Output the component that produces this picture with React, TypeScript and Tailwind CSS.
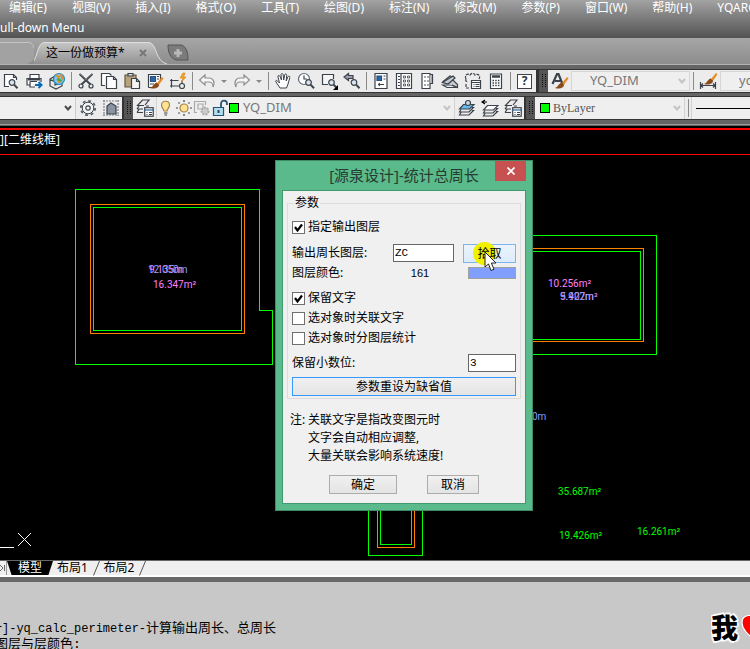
import { useState } from "react";
import type { ReactNode } from "react";

const INK = "#3c424b";

type IconProps = {
  label: string;
  children: ReactNode;
  className?: string;
};

function ToolButton({ label, children, className = "w-[23px]" }: IconProps) {
  return (
    <button
      type="button"
      aria-label={label}
      className={`flex h-[22px] shrink-0 items-center justify-center ${className}`}
    >
      <Glyph>{children}</Glyph>
    </button>
  );
}

function Glyph({ children }: { children: ReactNode }) {
  return (
    <svg width="18" height="18" viewBox="0 0 18 18" fill="none" stroke={INK} strokeWidth="1.2" className="shrink-0">
      {children}
    </svg>
  );
}

function Separator() {
  return (
    <span className="flex w-[6px] shrink-0 justify-center">
      <span className="h-[18px] w-px bg-[#8a8a8a]" />
    </span>
  );
}

function Grip() {
  return (
    <span className="flex w-[9px] shrink-0 items-center justify-center self-stretch bg-[#555]">
      <svg width="5" height="14" viewBox="0 0 5 14" shapeRendering="crispEdges">
        <path d="M1 0v14M4 0v14" stroke="#0c0c0c" strokeDasharray="1 1" />
      </svg>
    </span>
  );
}

function Caret() {
  return (
    <button type="button" aria-label="More" className="flex w-3 shrink-0 items-center justify-center">
      <svg width="6" height="3" viewBox="0 0 6 3">
        <path d="M0 0h6L3 3z" fill="#888" />
      </svg>
    </button>
  );
}

function Chevron({ color }: { color: string }) {
  return (
    <svg width="8" height="6" viewBox="0 0 8 6" fill="none" stroke={color} strokeWidth="2" className="pointer-events-none shrink-0">
      <path d="M1 1l3 3.5L7 1" />
    </svg>
  );
}

function Magnifier({ x, y }: { x: number; y: number }) {
  return (
    <g transform={`translate(${x} ${y})`}>
      <circle cx="3.5" cy="3.5" r="2.8" fill="#d9e4ee" />
      <path d="M5.6 5.6l3.4 3.6" strokeWidth="2" />
    </g>
  );
}

function Brush() {
  return (
    <g stroke="none">
      <path d="M11 11l5-6 1.6 1.2-4.4 6.2z" fill="#e88b25" />
      <path d="M4 16c3-.4 3-4 6.6-5.4l2.6 2.2c-.6 3.6-4.8 4.6-9.2 3.200z" fill="#8a4b1c" />
    </g>
  );
}

// stack of three open sheets, the top one optionally tinted
function Sheets({ top = "none" }: { top?: string }) {
  return (
    <g>
      <path d="M3 13.500L1.500 16h9.500l4.500-4.500H14M3 10.500L1.500 13h9.500l4.500-4.500H14" />
      <path d="M5.500 5.500H16L11.500 10H1.500z" fill={top} />
    </g>
  );
}

function LayerPanel() {
  return (
    <g>
      <path d="M1 13.500h6M3 10.500L1 13.500M1 10h6M3 7l-2 3M9 6l4-5H6.500L1.500 6.500H8M10 7h3" />
      <rect x="8.700" y="8.700" width="8.500" height="8.500" fill="#fff" />
      <path d="M8.500 11h9" stroke="#24639f" />
      <path d="M10.500 13.500h1m1.500 0h3m-5.500 2h1m1.500 0h3" strokeWidth="1" />
    </g>
  );
}

const menus = [
  "编辑(E)",
  "视图(V)",
  "插入(I)",
  "格式(O)",
  "工具(T)",
  "绘图(D)",
  "标注(N)",
  "修改(M)",
  "参数(P)",
  "窗口(W)",
  "帮助(H)",
  "YQARCH",
];

function MenuBar() {
  return (
    <header className="h-[38px] shrink-0 overflow-hidden bg-linear-to-b from-[#a3a3a3] to-[#535353] text-[12px] text-white">
      <nav className="flex h-[16px] items-center gap-[25px] pl-[9px] whitespace-nowrap">
        {menus.map((menu) => (
          <button key={menu} type="button" className="shrink-0 leading-[14px]">
            {menu}
          </button>
        ))}
      </nav>
      <p className="pt-[3px] leading-[18px]">ull-down Menu</p>
    </header>
  );
}

function DocumentTabs() {
  return (
    <div className="flex h-[27px] shrink-0 items-end border-b border-[#b2b2b2] bg-linear-to-b from-[#a6a6a6] to-[#8d8d8d]">
      <svg width="34" height="22" viewBox="0 0 34 22" className="shrink-0">
        <path d="M0 0h28c5 0 5 3 7 8v5c-2 5-4 8-8 9H0z" fill="#a2a2a2" />
        <path d="M0 .5h28c5 0 5 3 7 8" fill="none" stroke="#c4c4c4" />
      </svg>
      <div className="relative flex h-[22px] w-[133px] shrink-0 items-center justify-between pr-5 pl-3">
        <svg viewBox="0 0 134 22" preserveAspectRatio="none" className="absolute inset-0 size-full">
          <defs>
            <linearGradient id="tab" x1="0" y1="0" x2="0" y2="1">
              <stop offset="0" stopColor="#c6c6c6" />
              <stop offset="1" stopColor="#929292" />
            </linearGradient>
          </defs>
          <path d="M-4 22C4 20 2 2 10 .5h106c8 1 6 19 18 21.500" fill="url(#tab)" stroke="#dedede" />
        </svg>
        <button type="button" className="relative text-[12px] leading-[18px] whitespace-nowrap text-black">
          这一份做预算*
        </button>
        <button type="button" aria-label="Close drawing" className="relative">
          <svg width="8" height="8" viewBox="0 0 8 8" stroke="#777" strokeWidth="2">
            <path d="M1 1l6 6M7 1L1 7" />
          </svg>
        </button>
      </div>
      <button type="button" aria-label="New drawing" className="flex h-[22px] shrink-0 items-start pt-[2px]">
        <svg width="22" height="17" viewBox="0 0 22 17">
          <path d="M1 1h13c5 1 7 7 7 15H9C3 14 1 8 1 1z" fill="#7b7b7b" stroke="#555" />
          <path d="M11 5v8M7 9h8" stroke="#b9b9b9" strokeWidth="3" />
        </svg>
      </button>
    </div>
  );
}

function StandardToolbar() {
  return (
    <div className="flex h-[24px] shrink-0 items-center overflow-hidden border-y border-[#343434] bg-[#ececec]">
      <ToolButton label="Preview" className="w-[22px]">
        <path d="M7 14.500H2.500v-12h9l3 3V8" fill="#fff" />
        <path d="M11.500 2.500v3h3" />
        <Magnifier x={6.500} y={7} />
      </ToolButton>
      <ToolButton label="Plot">
        <path d="M5 6V2.500h9V6M4.500 13H2V6.500h14V10M5 9.500h7M5 9.500V15h5" fill="#fff" />
        <path d="M3 7.500h12" strokeWidth="2" />
        <path d="M10 13h6m-2.500-3l3 3-3 3" stroke="#0868b4" strokeWidth="2" />
      </ToolButton>
      <ToolButton label="Publish">
        <path d="M2 7l5-3v9l7-2v3l-6 3-6-3zM7 10l-5-3" fill="#e8e8e8" />
        <circle cx="11" cy="7" r="5.500" fill="#82c7e8" stroke="#168cc4" />
        <path d="M8 3l3 2-1 3 2 3M13 2l1 4 2 1" stroke="#e88922" strokeWidth="2" />
        <path d="M9 7l5 2" stroke="#4cab48" strokeWidth="2" />
      </ToolButton>
      <Separator />
      <ToolButton label="Cut">
        <path d="M2.500 2l11 10.500M15.500 2L4.500 12.500" strokeWidth="1.800" />
        <path d="M3 2l7 6M15 2L8 8" stroke="#777" strokeWidth="1" />
        <circle cx="4" cy="14" r="2" />
        <circle cx="14" cy="14" r="2" />
      </ToolButton>
      <ToolButton label="Copy">
        <path d="M5 13.500H1.500v-12h8l2 2" fill="#fff" />
        <path d="M6.500 4.500h7l3 3v9h-10z" fill="#fff" />
        <path d="M13.500 4.500v3h3" />
      </ToolButton>
      <ToolButton label="Paste">
        <path d="M2 3h11v12H2z" fill="#baa27c" stroke="#605747" />
        <path d="M5 1.500h5V4H5z" fill="#ddd" />
        <path d="M8.500 6.500h5l3 3v7h-8z" fill="#f4f4f4" />
        <path d="M13.500 6.500v3h3" />
      </ToolButton>
      <ToolButton label="Match properties">
        <path d="M2.500 15.500v-13h12V9M2.500 15.500H7" fill="#fff" />
        <path d="M4.500 4.500h5v5h-5z" fill="#2c67a5" stroke="#2a5384" />
        <path d="M11 4.500h2M11 7h2M4 12h4" />
        <Brush />
      </ToolButton>
      <ToolButton label="Block editor">
        <path d="M13 8.500V14H2.500V8.500h7M1 8.500h3M2.500 7v3M1 14h3M2.500 12.500v3" />
        <circle cx="13" cy="14" r="2.500" fill="#eee" />
        <path d="M14 1l-3 5h3l-1.500 4L17 5h-2.500L16 1z" fill="#f3a51e" stroke="#df8517" strokeWidth=".7" />
      </ToolButton>
      <Separator />
      <ToolButton label="Undo">
        <path d="M7 3L1.500 8 7 13v-3h4c3 0 4 1 4 5 2.500-5 0-9-4-9H7z" fill="#f5f5f5" stroke="#8f8f8f" />
      </ToolButton>
      <Caret />
      <ToolButton label="Redo">
        <path d="M11 3l5.500 5L11 13v-3H7c-3 0-4 1-4 5-2.500-5 0-9 4-9h4z" fill="#f5f5f5" stroke="#8f8f8f" />
      </ToolButton>
      <Caret />
      <Separator />
      <ToolButton label="Pan">
        <path
          d="M6 16L2 10c-1-2 1-2 2-.500L5.500 11 4 5c-.500-2 1.500-2 2-.500L7.500 8 7 3c0-2 2-2 2.200 0L9.700 8l1-5c.4-2 2.300-1 2 .500L12.200 9l1.600-4c.7-1.500 2.500-1 2 .700L14 12l-1.500 4z"
          fill="#fff"
          strokeWidth="1"
        />
      </ToolButton>
      <ToolButton label="Zoom realtime">
        <circle cx="7" cy="7" r="5.500" fill="#fff" stroke="#606a78" />
        <path d="M7 3.500V7h3" />
        <Magnifier x={8} y={7} />
      </ToolButton>
      <ToolButton label="Zoom window">
        <path d="M8 12.500H2.500v-10h11V7" fill="#f5f5f5" />
        <Magnifier x={8} y={7} />
        <path d="M18 13v5h-5z" fill="#000" stroke="none" />
      </ToolButton>
      <ToolButton label="Zoom previous">
        <path d="M5.500 1.500L1 5l4.500 3.500v-2H10v-3H5.500z" fill="#98a0ab" />
        <Magnifier x={7.500} y={7} />
      </ToolButton>
      <Separator />
      <ToolButton label="Properties">
        <path d="M3 1.500h12v15H3z" fill="#fff" />
        <path d="M5 4h4.500v4.500H5z" fill="#2c67a5" stroke="#244f7d" />
        <path d="M11.500 4h2M11.500 7h2M6 12.500h6M8 11l-2 1.500L8 14" strokeWidth="1" />
      </ToolButton>
      <ToolButton label="Design center">
        <path d="M1.500 1.500h15v15h-15zM6 1.500v15" fill="#fff" />
        <path d="M3 4.500h2M3 7.500h2M3 10.500h2M3 13.500h2" strokeWidth="1" />
        <path d="M8.500 4h2v2h-2zM12.500 4h2v2h-2zM8.500 8h2v2h-2zM12.500 8h2v2h-2zM8.500 12h2v2h-2zM12.500 12h2v2h-2z" strokeWidth=".8" />
      </ToolButton>
      <ToolButton label="Tool palettes">
        <path d="M4 1.500h8v15H4z" fill="#fff" />
        <path d="M12 2.500h2.500v9H12" fill="#bbb" />
        <path d="M6 4h2v2H6zM9 4h2v2H9zM6 8h2v2H6zM9 8h2v2H9zM6 12h2v2H6zM9 12h2v2H9z" fill="#aaa" stroke="none" />
      </ToolButton>
      <ToolButton label="Sheet set">
        <path d="M1.500 10L9 4l2 1-5 6M1.500 13h9l6 2.500H6z" fill="#e6e9ed" />
        <path d="M1.500 10.500L12 4l2 2-7 6zM7 12l5-4 4.500 4.500v3L11 13" fill="#c6cbd2" />
      </ToolButton>
      <ToolButton label="Markup">
        <path d="M2 7C0 3 4 1 6 3c2-3 5-1 5 0 3-2 6 1 4 4M2 7c-1 2 1 3 2 3M2 12v4h4" strokeDasharray="3 1" />
        <path d="M7.500 8.500h9v8h-9z" fill="#fff" />
        <path d="M7.500 10.500h9M9.500 12.500h1m1 0h4m-6 2h1m1 0h4" strokeWidth="1" />
      </ToolButton>
      <ToolButton label="Calculator">
        <path d="M3.500 2h11v14.500h-11z" fill="#fff" />
        <path d="M5 4.500h8" strokeWidth="2.500" />
        <path d="M5.500 8.500h8M5.500 11h8M5.500 13.500h8" strokeWidth="1.500" strokeDasharray="1.500 1.200" />
      </ToolButton>
      <Separator />
      <button
        type="button"
        aria-label="Help"
        className="mx-1 flex h-[15px] w-[15px] shrink-0 items-center justify-center border border-[#3c424b] bg-white text-[12px] font-bold text-[#30353c]"
      >
        ?
      </button>
      <span className="w-[3px] shrink-0 self-stretch bg-[#333]" />
      <Grip />
      <ToolButton label="Text style">
        <path d="M1.500 12L6 2h1.500L11.500 12M4 9h6" strokeWidth="2.200" />
        <Brush />
      </ToolButton>
      <div className="flex h-[20px] w-[119px] shrink-0 items-center border border-[#d5d5d5] bg-[#efefef] pr-[3px]">
        <select aria-label="Text style name" className="min-w-0 flex-1 appearance-none pl-[18px] text-[13px] text-[#777]">
          <option>YQ_DIM</option>
        </select>
        <Chevron color="#c4c4c4" />
      </div>
      <Separator />
      <ToolButton label="Dimension style" className="w-6">
        <path d="M1.500 10v7M16.500 10v7M2 13.500h14M4 11.500l-2 2 2 2M14 11.500l2 2-2 2" />
        <g transform="translate(1 -4)">
          <Brush />
        </g>
      </ToolButton>
      <div className="flex h-[20px] min-w-[110px] flex-1 items-center border border-[#d5d5d5] bg-[#efefef]">
        <select aria-label="Dimension style name" className="min-w-0 flex-1 appearance-none pl-[18px] text-[13px] text-[#777]">
          <option>yc</option>
        </select>
      </div>
    </div>
  );
}

function LayerToolbar() {
  return (
    <div className="flex h-[24px] shrink-0 items-center overflow-hidden border-y border-[#343434] bg-[#ececec]">
      <div className="flex h-[22px] w-[76px] shrink-0 items-center border-r border-[#ccc] bg-[#f0f0f0] pr-[3px]">
        <select aria-label="Workspace" className="min-w-0 flex-1 appearance-none">
          <option value="" />
        </select>
        <Chevron color="#4a4a4a" />
      </div>
      <ToolButton label="Workspace settings">
        <circle cx="9" cy="9" r="7.200" stroke="#5a616b" strokeWidth="1.800" strokeDasharray="2.827 2.827" />
        <circle cx="9" cy="9" r="5.800" fill="#f4f4f4" strokeWidth="1" />
        <circle cx="9" cy="9" r="2.200" />
      </ToolButton>
      <ToolButton label="My workspace">
        <path d="M2 1v16M16 1v16M1 2h16M1 16h16" stroke="#7b828b" strokeDasharray="2 1" />
        <path d="M5 15V7l4-3 5 3v8z" fill="#8b939e" />
      </ToolButton>
      <span className="w-[2px] shrink-0 self-stretch bg-[#333]" />
      <Grip />
      <ToolButton label="Layer properties">
        <LayerPanel />
      </ToolButton>
      <div className="flex h-[22px] w-[299px] shrink-0 items-center border-x border-[#d2d2d2] bg-[#efefef] pr-[3px]">
        <Glyph>
          <path d="M7 12c0-2-2.500-3-2.500-6 0-5 8-5 8 0 0 3-2.500 4-2.500 6z" fill="#ffe294" stroke="#a78445" />
          <path d="M7 14h3.500M7.500 16h2.500" />
        </Glyph>
        <Glyph>
          <path d="M9 1v2M9 15v2M1 9h2M15 9h2M3.500 3.500l1 1M13.500 13.500l1 1M3.500 14.500l1-1M13.500 4.500l1-1" />
          <circle cx="9" cy="9" r="4" fill="#ffe294" stroke="#a78445" />
        </Glyph>
        <Glyph>
          <path d="M4 13.500H1.500v-11h11V6M5 5h5v5H5z" stroke="#aaa" />
          <circle cx="12" cy="12" r="3.500" fill="#ccc" stroke="#aaa" strokeWidth="2" strokeDasharray="2 1" />
        </Glyph>
        <Glyph>
          <path d="M10 8V5c0-5 6-4 6-.500V6" stroke="#255374" strokeWidth="1.800" />
          <path d="M2.500 8.500h10v8h-10z" fill="#b1dff2" stroke="#255374" />
          <path d="M7.500 11v3" strokeWidth="2" />
        </Glyph>
        <span className="size-[10px] shrink-0 border border-black bg-[#00ff00]" />
        <select aria-label="Layer" className="min-w-0 flex-1 appearance-none pl-1 text-[13px] text-[#777]">
          <option>YQ_DIM</option>
        </select>
        <Chevron color="#c4c4c4" />
      </div>
      <ToolButton label="Make current">
        <Sheets top="#64bbed" />
        <circle cx="10" cy="4" r="2.500" fill="#c7ddeb" />
      </ToolButton>
      <ToolButton label="Layer previous">
        <g transform="translate(1 1)">
          <Sheets top="#fff" />
        </g>
        <path d="M1 3h5M4 1L1 3l3 2" stroke="#000" />
      </ToolButton>
      <ToolButton label="Layer states">
        <LayerPanel />
      </ToolButton>
      <span className="w-[2px] shrink-0 self-stretch bg-[#333]" />
      <Grip />
      <div className="flex h-[22px] w-[150px] shrink-0 items-center border-r border-[#d2d2d2] bg-[#efefef] pr-[3px] pl-[5px]">
        <span className="size-[10px] shrink-0 border border-black bg-[#00ff00]" />
        <select
          aria-label="Color"
          className="min-w-0 flex-1 appearance-none pl-[3px] font-['Liberation_Serif',serif] text-[12px] text-[#555]"
        >
          <option>ByLayer</option>
        </select>
        <Chevron color="#c4c4c4" />
      </div>
      <Separator />
      <button type="button" aria-label="Linetype" className="flex h-[22px] flex-1 items-center border-l border-[#d2d2d2] bg-[#efefef] pl-1">
        <span className="h-px w-full bg-black" />
      </button>
    </div>
  );
}

type DrawingLabel = { x: number; y: number; text: string; color: string };

const drawingLabels: DrawingLabel[] = [
  { x: 149, y: 273, text: "9.135m", color: "#ff80ff" },
  { x: 148, y: 273, text: "12.050m", color: "#80a0ff" },
  { x: 153, y: 288, text: "16.347m²", color: "#ff80ff" },
  { x: 548, y: 287, text: "10.256m²", color: "#ff80ff" },
  { x: 560, y: 300, text: "5.407m²", color: "#ff80ff" },
  { x: 560, y: 300, text: "9.922m", color: "#80a0ff" },
  { x: 532, y: 420, text: "0m", color: "#80a0ff" },
  { x: 558, y: 495, text: "35.687m²", color: "#00ff00" },
  { x: 559, y: 539, text: "19.426m²", color: "#00ff00" },
  { x: 637, y: 535, text: "16.261m²", color: "#00ff00" },
];

function Drawing() {
  return (
    <svg width="750" height="434" viewBox="0 126 750 434" className="absolute top-0 left-0" fill="none">
      <g stroke="#00ff00" shapeRendering="crispEdges">
        <path d="M75.500 189.500h184v121h13v54h-197z" />
        <path d="M93.500 207.500h148v123h-148z" />
        <path d="M500 235.500h156.500v119H500M500 251.500h140.500v88H500" />
        <path d="M368.500 480v75.500h54V480M380.500 480v64.500h31V480" />
      </g>
      <g stroke="#ff8000" shapeRendering="crispEdges">
        <path d="M90.500 204.500h154v129h-154z" />
        <path d="M500 248.500h143.500v93H500" />
        <path d="M377.500 480v67.500h37V480" />
      </g>
      <path d="M18 533l13 13M31 533l-13 13M0 547.500h14" stroke="#fff" />
      <g className="font-['Roboto',sans-serif] text-[10px]">
        {drawingLabels.map((label) => (
          <text key={label.text} x={label.x} y={label.y} fill={label.color}>
            {label.text}
          </text>
        ))}
      </g>
    </svg>
  );
}

type CheckRowProps = {
  label: string;
  checked: boolean;
  onChange: (checked: boolean) => void;
};

function CheckRow({ label, checked, onChange }: CheckRowProps) {
  return (
    <label className="flex h-5 items-center gap-[3px]">
      <span className="relative size-[13px] shrink-0">
        <input
          type="checkbox"
          checked={checked}
          onChange={(e) => onChange(e.target.checked)}
          className="block size-[13px] appearance-none border border-[#707070] bg-white"
        />
        {checked && (
          <svg viewBox="0 0 13 13" className="pointer-events-none absolute inset-0" fill="none" stroke="#000" strokeWidth="2.200">
            <path d="M3 6l2.500 3.500L10 3.500" />
          </svg>
        )}
      </span>
      {label}
    </label>
  );
}

const plainButton = "h-[19px] border border-[#acacac] bg-linear-to-b from-[#f0f0f0] to-[#e4e4e4] leading-[17px]";
const textField = "h-[18px] border border-[#666] bg-white px-px font-['Liberation_Mono',monospace] text-[11px]";

function PerimeterDialog() {
  const [useLayer, setUseLayer] = useState(true);
  const [keepText, setKeepText] = useState(true);
  const [linkText, setLinkText] = useState(false);
  const [byLayer, setByLayer] = useState(false);

  return (
    <div
      role="dialog"
      aria-labelledby="dialog-title"
      className="absolute top-[34px] left-[275px] w-[258px] border border-[#3f8c67] bg-[#5bba8b] px-[6px] pb-[6px] text-black"
    >
      <div className="grid h-[29px] grid-cols-[31px_1fr_31px] items-start">
        <h1 id="dialog-title" className="col-start-2 text-center text-[15px] leading-7 whitespace-nowrap text-[#263c31]">
          [源泉设计]-统计总周长
        </h1>
        <button type="button" aria-label="Close" className="flex h-5 items-center justify-center bg-[#c75050]">
          <svg width="8" height="8" viewBox="0 0 8 8" stroke="#fff" strokeWidth="1.700">
            <path d="M.5.500l7 7M7.500.500l-7 7" />
          </svg>
        </button>
      </div>
      <form
        className="border border-[#419a6d] bg-[#f0f0f0] px-1 pt-1 pb-[9px] text-[12px] leading-[18px]"
        onSubmit={(e) => e.preventDefault()}
      >
        <fieldset className="border border-[#dcdcdc] px-1 pb-[2px]">
          <legend className="ml-[2px] px-px leading-4">参数</legend>
          <div className="pt-[6px]">
            <CheckRow label="指定输出图层" checked={useLayer} onChange={setUseLayer} />
          </div>
          <div className="mt-1 flex h-6 items-center">
            <label htmlFor="layer" className="flex-1">
              输出周长图层:
            </label>
            <input id="layer" defaultValue="ZC" className={`w-[61px] ${textField}`} />
            <button
              type="button"
              className="relative ml-[9px] h-[19px] w-[53px] border border-[#7eb4ea] bg-linear-to-b from-[#ecf4fc] to-[#dcecfc] leading-[17px]"
            >
              <span className="absolute -top-[3px] left-[9px] size-[23px] rounded-full bg-[#f0f000]" />
              <span className="relative">拾取</span>
              <svg width="14" height="21" viewBox="0 0 14 21" className="absolute top-[6px] left-5">
                <path d="M1 1v15l3.500-3 2.500 6.500 3-1.300L7.400 12H12z" fill="#fff" stroke="#222" />
              </svg>
            </button>
          </div>
          <div className="flex h-4 items-center">
            <span className="flex-1">图层颜色:</span>
            <output className="w-[54px] text-center font-['Liberation_Sans',sans-serif] text-[11px]">161</output>
            <button type="button" aria-label="图层颜色" className="ml-[21px] h-3 w-12 border border-[#a0a0a0] bg-[#809fff]" />
          </div>
          <div className="mt-[7px]">
            <CheckRow label="保留文字" checked={keepText} onChange={setKeepText} />
            <CheckRow label="选对象时关联文字" checked={linkText} onChange={setLinkText} />
            <CheckRow label="选对象时分图层统计" checked={byLayer} onChange={setByLayer} />
          </div>
          <div className="mt-[5px] flex h-5 items-center">
            <label htmlFor="digits" className="flex-1">
              保留小数位:
            </label>
            <input id="digits" defaultValue="3" className={`w-12 ${textField}`} />
          </div>
          <button
            type="button"
            className="mt-1 block h-[19px] w-full border border-[#3399ff] bg-linear-to-b from-[#f0f0f0] to-[#e4e4e4] leading-[17px]"
          >
            参数重设为缺省值
          </button>
        </fieldset>
        <div className="mt-3 flex pl-[3px]">
          <span className="w-[18px]">注:</span>
          <p>
            关联文字是指改变图元时
            <br />
            文字会自动相应调整,
            <br />
            大量关联会影响系统速度!
          </p>
        </div>
        <div className="mt-[10px] flex justify-center gap-[30px]">
          <button type="submit" className={`w-[68px] ${plainButton}`}>
            确定
          </button>
          <button type="button" className={`w-[52px] ${plainButton}`}>
            取消
          </button>
        </div>
      </form>
    </div>
  );
}

function Slash() {
  return (
    <svg width="8" height="15" viewBox="0 0 8 15" fill="none" stroke="#555" className="shrink-0">
      <path d="M7.500 0L1.500 14.500" />
    </svg>
  );
}

function LayoutTabs() {
  return (
    <div className="flex h-[17px] shrink-0 items-start border-t border-b-2 border-t-[#666] border-b-white bg-[#efefef] text-[12px] leading-[14px]">
      <button type="button" aria-label="Last layout" className="h-[14px] w-[7px] border-r border-[#999]">
        <svg width="6" height="14" viewBox="0 0 6 14" fill="none" stroke="#666">
          <path d="M0 4l3 3-3 3M4.500 4v6" />
        </svg>
      </button>
      <button type="button" className="h-[14px] w-[46px] bg-black text-white [clip-path:polygon(0_0,100%_0,90%_100%,10%_100%)]">
        模型
      </button>
      <button type="button" className="w-[39px] text-center">
        布局1
      </button>
      <Slash />
      <button type="button" className="w-[38px] text-center">
        布局2
      </button>
      <Slash />
    </div>
  );
}

function CommandLine() {
  return (
    <section className="flex h-[72px] shrink-0 items-end justify-between overflow-hidden border-t-[5px] border-[#686868] bg-[#c8c8c8]">
      <div className="-mb-[3px] -ml-[11px] font-['Liberation_Mono','Noto_Sans_CJK_SC',monospace] text-[12px] leading-[15px] whitespace-nowrap text-black">
        <p>
          <span className="text-[13px]">计</span>]-yq_calc_perimeter-<span className="text-[13px]">计算输出周长、总周长</span>
        </p>
        <p className="pl-[6px] text-[13px]">图层与层颜色:</p>
      </div>
      <div className="flex w-[39px] shrink-0 items-center gap-[3px] overflow-hidden pb-[5px]">
        <span className="shrink-0 text-[27px] leading-8 font-black text-black [text-shadow:0_0_2px_#fff,2px_1px_1px_#fff,-2px_-1px_1px_#fff,1px_-2px_1px_#fff,-1px_2px_1px_#fff]">
          我
        </span>
        <svg width="32" height="29" viewBox="0 0 30 27" className="shrink-0">
          <path d="M15 26C8 20 1 15 1 8c0-8 11-9 14-2 3-7 14-6 14 2 0 7-7 12-14 18z" fill="#f00" stroke="#fff" />
        </svg>
      </div>
    </section>
  );
}

export default function App() {
  return (
    <div className="flex h-screen flex-col overflow-hidden bg-[#656565] font-['Noto_Sans','Noto_Sans_CJK_SC',sans-serif]">
      <MenuBar />
      <DocumentTabs />
      <div className="flex shrink-0 flex-col gap-[3px] pt-1 pb-[4px]">
        <StandardToolbar />
        <LayerToolbar />
      </div>
      <div className="h-[2px] shrink-0 border-t border-[#999]" />
      <main className="relative min-h-0 flex-1 overflow-hidden bg-black">
        <div className="mt-[2px] flex h-[27px] items-center border-t-2 border-b border-[#f00] pb-[5px] text-[12px] leading-[18px] text-white">
          ][二维线框]
        </div>
        <Drawing />
        <PerimeterDialog />
      </main>
      <LayoutTabs />
      <CommandLine />
    </div>
  );
}
